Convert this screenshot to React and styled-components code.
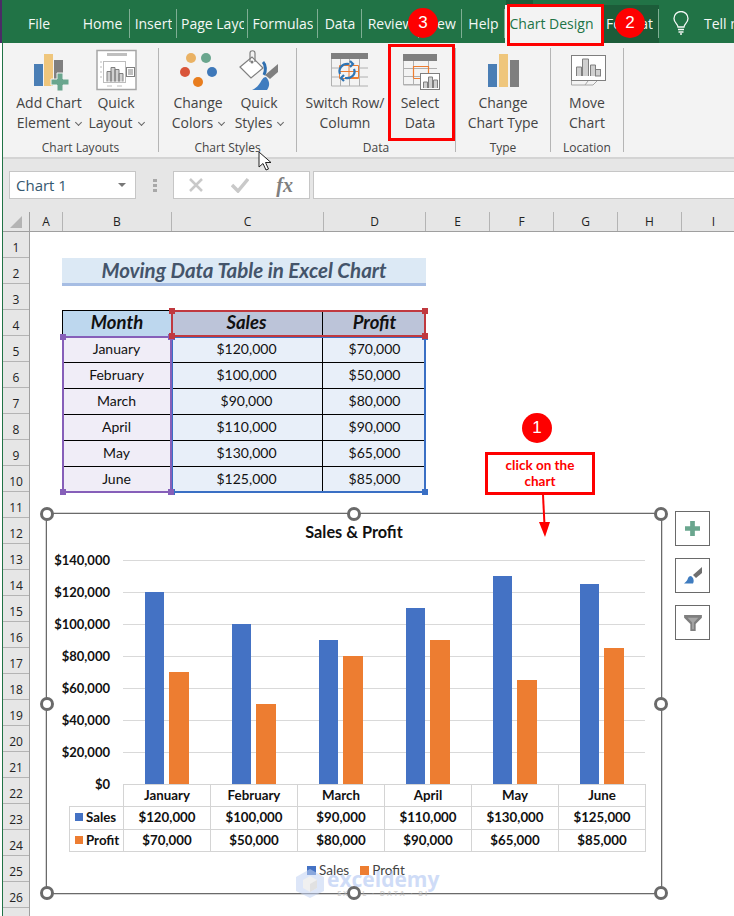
import React from 'react'
import styled, { createGlobalStyle } from 'styled-components'

const UI_FONT = '"Open Sans", "Noto Sans", sans-serif'
const CELL_FONT = 'Lato, "Liberation Sans", sans-serif'

const GlobalStyle = createGlobalStyle`
  html, body { margin: 0; padding: 0; background: #fff; }
`

const Page = styled.div`
  position: relative;
  width: 734px;
  height: 916px;
  overflow: hidden;
  display: flex;
  background: #fff;
  font-family: ${UI_FONT};
`

const LeftEdge = styled.div`
  width: 2px;
  flex: none;
  background: linear-gradient(#4b2c66 43px, #fff 43px);
  border-right: 1px solid #217346;
`

const Main = styled.div`
  flex: 1;
  min-width: 0;
  display: flex;
  flex-direction: column;
`

/* tabs */
const TabBar = styled.div`
  height: 43px;
  flex: none;
  display: flex;
  align-items: flex-end;
  overflow: hidden;
  background: #217346;
`

const Tab = styled.div`
  width: ${p => p.$w}px;
  height: 38px;
  flex: none;
  box-sizing: border-box;
  padding: 0 ${p => p.$pr || p.$pad || 3}px 2px ${p => p.$pad || 3}px;
  display: flex;
  align-items: center;
  justify-content: center;
  font-size: 14px;
  color: ${p => (p.$active ? '#217346' : '#f4f8f5')};
  background: ${p => (p.$active ? '#f3f3f3' : p.$dark ? '#1c5c39' : 'transparent')};
  position: relative;

  &::after {
    content: '';
    display: ${p => (p.$sep ? 'block' : 'none')};
    position: absolute;
    right: 0;
    top: 4px;
    height: 29px;
    width: 1px;
    background: #7fae94;
  }
`

const TabLabel = styled.span`
  min-width: 0;
  overflow: hidden;
  white-space: nowrap;
`

const TellMe = styled.div`
  flex: none;
  display: flex;
  align-items: center;
  gap: 15px;
  height: 38px;
  padding: 0 0 2px 14px;
  box-sizing: border-box;
  font-size: 14px;
  color: #f4f8f5;
  white-space: nowrap;
`

const TabSliver = styled.div`
  position: absolute;
  left: 506px;
  top: 0;
  width: 27px;
  height: 5px;
  background: #1c5c39;
`

/* ribbon */
const Ribbon = styled.div`
  height: 109px;
  flex: none;
  padding-top: 5px;
  display: flex;
  align-items: flex-start;
  background: #f3f3f3;
  border-bottom: 2px solid #d4d4d4;
`

const Group = styled.div`
  width: ${p => p.$w}px;
  height: 104px;
  flex: none;
  box-sizing: border-box;
  border-right: 1px solid #b5b5b5;
  display: flex;
  flex-direction: column;
`

const GroupButtons = styled.div`
  flex: 1;
  display: flex;
  padding-left: ${p => p.$pad || 0}px;
  justify-content: ${p => (p.$pad ? 'flex-start' : 'center')};
`

const GroupLabel = styled.div`
  height: 10px;
  line-height: 12px;
  text-align: center;
  font-size: 12px;
  color: #444;
  white-space: nowrap;
`

const RibbonButton = styled.div`
  width: ${p => p.$w}px;
  flex: none;
  display: flex;
  flex-direction: column;
  align-items: center;
`

const IconSlot = styled.div`
  height: 45px;
  display: flex;
  align-items: center;
  justify-content: center;
`

const ButtonText = styled.div`
  font-size: 14px;
  line-height: 20px;
  color: #444;
  text-align: center;
  white-space: nowrap;
`

const Caret = styled.span`
  display: inline-block;
  margin-left: 6px;
  width: 4px;
  height: 4px;
  border-right: 1px solid #666;
  border-bottom: 1px solid #666;
  transform: translateY(-3px) rotate(45deg);
`

/* formula bar */
const FormulaBar = styled.div`
  height: 53px;
  flex: none;
  box-sizing: border-box;
  padding: 12px 0 0 6px;
  display: flex;
  align-items: flex-start;
  background: #e6e6e6;
`

const FieldBox = styled.div`
  height: 28px;
  box-sizing: border-box;
  background: #fff;
  border: 1px solid #c6c6c6;
  display: flex;
  align-items: center;
`

const NameBox = styled(FieldBox)`
  width: 127px;
  flex: none;
  justify-content: space-between;
  padding: 0 9px 0 6px;
  font-size: 15px;
  color: #35586f;
`

const NameArrow = styled.span`
  width: 0;
  height: 0;
  border-left: 4px solid transparent;
  border-right: 4px solid transparent;
  border-top: 4px solid #777;
`

const Grip = styled.div`
  width: 4px;
  height: 14px;
  margin: 8px 16px 0 17px;
  flex: none;
  background: repeating-linear-gradient(#a8a8a8 0 3px, transparent 3px 5px);
`

const FxBox = styled(FieldBox)`
  width: 137px;
  flex: none;
  padding: 0 16px 0 14px;
  justify-content: space-between;
`

const FxText = styled.span`
  font-family: "Liberation Serif", serif;
  font-style: italic;
  font-weight: bold;
  font-size: 20px;
  color: #7f7f7f;
`

const FormulaInput = styled(FieldBox)`
  flex: 1;
  margin-left: 3px;
  border-right: none;
`

/* column and row headers */
const ColumnHeaders = styled.div`
  height: 19px;
  flex: none;
  display: flex;
  background: #e6e6e6;
  border-bottom: 1px solid #9f9f9f;
`

const Corner = styled.div`
  width: 27px;
  flex: none;
  box-sizing: border-box;
  border-right: 1px solid #9f9f9f;
  display: flex;
  justify-content: center;
  align-items: flex-end;
  padding-bottom: 3px;
`

const ColumnHead = styled.div`
  width: ${p => p.$w}px;
  flex: none;
  box-sizing: border-box;
  border-right: 1px solid #b4b4b4;
  text-align: center;
  font-size: 12px;
  line-height: 19px;
  color: #222;
`

const Sheet = styled.div`
  flex: 1;
  min-height: 0;
  display: flex;
`

const RowHeaders = styled.div`
  width: 27px;
  flex: none;
  box-sizing: border-box;
  background: #e6e6e6;
  border-right: 1px solid #9f9f9f;
`

const RowHead = styled.div`
  height: 26px;
  box-sizing: border-box;
  border-bottom: 1px solid #b4b4b4;
  text-align: center;
  font-size: 12px;
  line-height: 31px;
  color: #222;
`

const SheetBody = styled.div`
  flex: 1;
  min-width: 0;
  padding-top: 26px;
`

/* worksheet table */
const TitleBand = styled.div`
  width: 364px;
  height: 28px;
  margin-left: 32px;
  box-sizing: border-box;
  border-bottom: 3px solid #a6bde3;
  background: #dce9f5;
  text-align: center;
  font-family: ${CELL_FONT};
  font-weight: bold;
  font-style: italic;
  font-size: 20.5px;
  line-height: 24px;
  color: #44546a;
`

const TableWrap = styled.div`
  position: relative;
  width: 364px;
  margin: 24px 0 0 32px;
`

const DataTable = styled.div`
  display: grid;
  grid-template-columns: 109px 152px 103px;
  grid-auto-rows: 26px;
`

const Cell = styled.div`
  box-sizing: border-box;
  display: flex;
  align-items: center;
  justify-content: center;
  padding-bottom: ${p => (p.$head ? 3 : 2)}px;
  font-family: ${CELL_FONT};
  font-size: ${p => (p.$head ? 18.5 : 14)}px;
  font-weight: ${p => (p.$head ? 'bold' : 'normal')};
  font-style: ${p => (p.$head ? 'italic' : 'normal')};
  color: #111;
  background: ${p => p.$bg};
  border-top: 1px solid #000;
  border-left: ${p => (p.$boxed ? '1px solid #000' : 'none')};
  border-right: ${p => (p.$divider ? '1px solid #000' : 'none')};
`

const Selection = styled.div`
  position: absolute;
  left: ${p => p.$l}px;
  top: ${p => p.$t}px;
  width: ${p => p.$w}px;
  height: ${p => p.$h}px;
  box-sizing: border-box;
  border: 2px solid ${p => p.$c};
`

const SelectionHandle = styled.span`
  position: absolute;
  width: 6px;
  height: 6px;
  background: ${p => p.$c};
  ${p => (p.$x === 'l' ? 'left: -4px;' : 'right: -4px;')}
  ${p => (p.$y === 't' ? 'top: -4px;' : 'bottom: -4px;')}
`

/* chart */
const ChartRow = styled.div`
  display: flex;
  align-items: flex-start;
  gap: 13px;
  margin: 21px 0 0 16px;
`

const ChartFrame = styled.div`
  position: relative;
  width: 616px;
  height: 381px;
  flex: none;
  box-sizing: border-box;
  border: 1px solid #6a6a6a;
  box-shadow: 0 0 0 1px #d6d6d6;
  background: #fff;
  font-family: ${CELL_FONT};
  color: #111;
`

const ChartHandle = styled.span`
  position: absolute;
  left: ${p => p.$x}%;
  top: ${p => p.$y}%;
  width: 14px;
  height: 14px;
  box-sizing: border-box;
  margin: -7px 0 0 -7px;
  border: 3px solid #6a6a6a;
  border-radius: 50%;
  background: #fff;
`

const ChartTitle = styled.div`
  height: 46px;
  line-height: 36px;
  text-align: center;
  font-weight: bold;
  font-size: 16.3px;
`

const PlotRow = styled.div`
  display: flex;
  height: 224px;
`

const YAxis = styled.div`
  width: 76px;
  flex: none;
  box-sizing: border-box;
  padding-right: 13px;
  display: flex;
  flex-direction: column;
  justify-content: space-between;
  align-items: flex-end;
  font-weight: bold;
  font-size: 13px;
`

const YLabel = styled.div`
  height: 0;
  line-height: 0;
`

const Plot = styled.div`
  width: 522px;
  display: flex;
  background-image: linear-gradient(#d9d9d9 1px, transparent 1px);
  background-size: 100% 32px;
`

const Category = styled.div`
  flex: 1;
  display: flex;
  justify-content: center;
  align-items: flex-end;
  gap: 5px;
`

const Bar = styled.div`
  width: 19.5px;
  height: ${p => p.$h}px;
  background: ${p => p.$c};
`

const ChartTable = styled.div`
  display: grid;
  grid-template-columns: 54px repeat(6, 87px);
  grid-template-rows: 22px 23px 22px;
  margin-left: 22px;
`

const ChartCell = styled.div`
  box-sizing: border-box;
  margin: 0 -1px -1px 0;
  padding-bottom: 2px;
  border: 1px solid ${p => (p.$blank ? 'transparent' : '#d4d4d4')};
  display: flex;
  align-items: center;
  justify-content: center;
  font-weight: bold;
  font-size: 13.3px;
`

const KeyCell = styled(ChartCell)`
  justify-content: flex-start;
  gap: 3px;
  padding-left: 5px;
`

const Swatch = styled.span`
  width: ${p => p.$s || 8}px;
  height: ${p => p.$s || 8}px;
  flex: none;
  background: ${p => p.$c};
`

const Legend = styled.div`
  display: flex;
  justify-content: center;
  gap: 11px;
  margin-top: 11px;
  padding-left: 4px;
  font-size: 13.5px;
  color: #444;
`

const LegendItem = styled.div`
  display: flex;
  align-items: center;
  gap: 3px;
`

const Watermark = styled.div`
  position: absolute;
  left: 249px;
  top: 355px;
  display: flex;
  align-items: center;
  gap: 3px;
  opacity: 0.55;
  pointer-events: none;
`

const WatermarkName = styled.div`
  font-family: ${UI_FONT};
  font-weight: bold;
  font-size: 21px;
  line-height: 21px;
  color: #a9c1f2;
`

const WatermarkSub = styled.div`
  font-family: ${UI_FONT};
  font-weight: bold;
  font-size: 7px;
  line-height: 8px;
  letter-spacing: 2px;
  text-align: center;
  color: #b5b5b5;
`

const SideButtons = styled.div`
  display: flex;
  flex-direction: column;
  gap: 12px;
  margin-top: -2px;
`

const SideButton = styled.div`
  width: 35px;
  height: 35px;
  box-sizing: border-box;
  border: 1px solid #6a6a6a;
  background: #fff;
  display: flex;
  align-items: center;
  justify-content: center;
`

/* red annotations */
const Badge = styled.div`
  position: absolute;
  left: ${p => p.$x - 15}px;
  top: ${p => p.$y - 15}px;
  width: 30px;
  height: 30px;
  border-radius: 50%;
  background: #fe0000;
  color: #fff;
  font-family: "Liberation Sans", sans-serif;
  font-size: 17px;
  line-height: 30px;
  text-align: center;
`

const RedBox = styled.div`
  position: absolute;
  left: ${p => p.$x}px;
  top: ${p => p.$y}px;
  width: ${p => p.$w}px;
  height: ${p => p.$h}px;
  box-sizing: border-box;
  border: 3px solid #fe0000;
`

const CalloutBox = styled(RedBox)`
  display: flex;
  align-items: center;
  justify-content: center;
  padding: 0 14px 2px;
  background: #fff;
  text-align: center;
  font-family: ${CELL_FONT};
  font-weight: bold;
  font-size: 13.5px;
  line-height: 16px;
  color: #fe0000;
`

const Overlay = styled.svg`
  position: absolute;
  left: ${p => p.$x}px;
  top: ${p => p.$y}px;
`

const BarsIcon = ({ plus }) => (
  <svg width="46" height="45" viewBox="-1 0 46 45">
    <rect x={plus ? 7 : 7} y="16" width="9" height={plus ? 22 : 23} fill="#4a7eb5" />
    <rect x={plus ? 17 : 18} y="6" width="9" height={plus ? 32 : 33} fill="#efc67c" />
    <rect x={plus ? 27 : 29} y="12" width="9" height={plus ? 20 : 27} fill="#7f7f7f" />
    {plus && (
      <path
        d="M30 25h6v6h6v6h-6v6h-6v-6h-6v-6h6z"
        fill="#6aa68e"
        stroke="#f3f3f3"
        strokeWidth="1"
      />
    )}
  </svg>
)

const QuickLayoutIcon = () => (
  <svg width="46" height="45" viewBox="-1 0 46 45">
    <rect x="3" y="2.5" width="39" height="39" fill="#fff" stroke="#a6a6a6" strokeWidth="1.5" />
    <rect x="13" y="5" width="20" height="3" fill="#bfbfbf" />
    <rect x="9.5" y="13.5" width="22" height="21" fill="#fff" stroke="#bdbdbd" />
    <path d="M6 14h2M6 19h2M6 24h2M6 29h2M13 38h5M23 38h5" stroke="#bdbdbd" />
    <path d="M13 33.500v-10h4v10M17 33.500v-14h4v14M21 33.500v-12h4v12M25 33.500v-8h4v8" fill="#d0d0d0" stroke="#7f7f7f" />
    <rect x="32.500" y="19.500" width="8" height="9" fill="#fff" stroke="#7f7f7f" />
    <path d="M34 22h5M34 24h5M34 26h5" stroke="#7f7f7f" />
  </svg>
)

const ColorsIcon = () => (
  <svg width="46" height="45" viewBox="-1 0 46 45">
    <circle cx="15" cy="10" r="5" fill="#eab264" />
    <circle cx="30" cy="10" r="5" fill="#6aa68e" />
    <circle cx="9" cy="24" r="5" fill="#d9553a" />
    <circle cx="36" cy="24" r="5" fill="#3e78b9" />
    <circle cx="22" cy="34" r="5" fill="#e87d1e" />
  </svg>
)

const StylesIcon = () => (
  <svg width="46" height="45" viewBox="-1 0 46 45">
    <path d="M3 19 15 9l11 11-12 10z" fill="#fff" stroke="#7f7f7f" strokeWidth="1.2" />
    <path d="M13 14V5c0-3 5-3 5 0v9" fill="none" stroke="#7f7f7f" strokeWidth="1.2" />
    <circle cx="15" cy="14" r="1.500" fill="#7f7f7f" />
    <path d="M26 14c3 3 3 9 1 13" fill="none" stroke="#2f6fb0" strokeWidth="3" />
    <path d="M41 16v8l-8 7-5-4z" fill="#7f7f7f" />
    <path d="M29 29c-3 0-4 3-6 6-2 3-5 6-8 7h15c3-4 3-9-1-13z" fill="#3f7cbf" />
  </svg>
)

const SwitchIcon = () => (
  <svg width="46" height="45" viewBox="-1 0 46 45">
    <rect x="8" y="5" width="37" height="6" fill="#7f7f7f" />
    <path d="M8.500 11v27h36.500M8 20h37M8 29h37M17.500 11v27M26.500 11v27M36.500 11v27" fill="none" stroke="#b0b0b0" />
    <path d="M16.500 17.500h19v13h-19z" fill="#f3f3f3" stroke="#ed7d31" />
    <path d="M26 29.500h9.500M26 17.500v13M16.500 23.500h19" fill="none" stroke="#ed7d31" />
    <path d="M17 26c-2-5 2-11 9-10M27 13l3 3-3 3M31 21c2 5-2 10-9 9M21 33l-3-3 3-3" fill="none" stroke="#2f75b5" strokeWidth="2.200" />
  </svg>
)

const SelectDataIcon = () => (
  <svg width="46" height="45" viewBox="-1 0 46 45">
    <rect x="5" y="6" width="34" height="7" fill="#7f7f7f" />
    <path d="M5.500 13v24h17M5 20.500h34M5 28.500h18M5 36.500h18M15.500 13v24M30.500 13v12" fill="none" stroke="#b0b0b0" />
    <path d="M15.500 30V18.500h15V25M15.500 30.500H22" fill="none" stroke="#ed7d31" strokeWidth="1.200" />
    <rect x="22.500" y="25.500" width="19" height="16" fill="#fff" stroke="#7f7f7f" />
    <path d="M25.500 40v-6h4v6M30.500 40V29h4v11M35.500 40v-8h4v8" fill="#d0d0d0" stroke="#7f7f7f" />
  </svg>
)

const MoveChartIcon = () => (
  <svg width="46" height="45" viewBox="-1 0 46 45">
    <rect x="6.500" y="7.500" width="34" height="25" fill="#fff" stroke="#7f7f7f" />
    <path d="M11.500 28v-9h5v9M17.500 28V11h6v17M25.500 28V17h5v11" fill="#d0d0d0" stroke="#7f7f7f" />
    <rect x="30.500" y="21.500" width="5" height="6.500" fill="#d0d0d0" stroke="#7f7f7f" />
    <path d="M6.500 33v4H20l3-4M20 37h8l4-4" fill="none" stroke="#a6a6a6" />
  </svg>
)

const BulbIcon = () => (
  <svg width="16" height="24" viewBox="0 0 16 24" fill="none" stroke="#f4f8f5" strokeWidth="1.300">
    <path d="M5 16c0-3-4-4-4-8.500a7 7 0 0 1 14 0C15 12 11 13 11 16z" />
    <path d="M5 18.500h6M5.500 21h5M7 23h2" />
  </svg>
)

const CrossIcon = () => (
  <svg width="16" height="16" viewBox="0 0 16 16">
    <path d="M2 2 14 14M14 2 2 14" stroke="#c9c9c9" strokeWidth="2.500" />
  </svg>
)

const CheckIcon = () => (
  <svg width="18" height="16" viewBox="0 0 18 16">
    <path d="M1 8 7 14 17 2" fill="none" stroke="#c9c9c9" strokeWidth="3.500" />
  </svg>
)

const CornerIcon = () => (
  <svg width="12" height="12" viewBox="0 0 12 12">
    <path d="M12 0V12H0z" fill="#b4b4b4" />
  </svg>
)

const PlusIcon = () => (
  <svg width="15" height="15" viewBox="0 0 16 16">
    <path d="M5.500 0h5v5.500H16v5h-5.500V16h-5v-5.500H0v-5h5.500z" fill="#6aa68e" />
  </svg>
)

const BrushIcon = () => (
  <svg width="18" height="17" viewBox="0 0 18 17">
    <path d="M18 0v6l-6 5-3-3z" fill="#6f6f6f" />
    <path d="M9 9.500 11 11.500" stroke="#fff" />
    <path d="M7 9c-3 0-3 3-4 4.500-.8 1-1.800 2-3 3h9c1.500-2.500.5-6-2-7.500z" fill="#3f7cbf" />
  </svg>
)

const FunnelIcon = () => (
  <svg width="18" height="16" viewBox="0 0 20 18">
    <path d="M0 0h20v3l-7 7v8H7v-8L0 3z" fill="#7f7f7f" />
    <path d="M4 3h12l-5 5.500V16H9V8.500z" fill="#a6a6a6" />
  </svg>
)

const WatermarkLogo = () => (
  <svg width="28" height="29" viewBox="0 0 28 29">
    <path d="M14 0 28 8v14l-14 7-14-7V8z" fill="#c3d3f3" />
    <path d="M14 7 21 11v8l-7 4-7-4v-8z" fill="#e4e4e4" />
    <path d="M14 15l7-4v8l-7 4z" fill="#c9c9c9" />
  </svg>
)

const TABS = [
  { label: 'File', w: 72 },
  { label: 'Home', w: 55, sep: true },
  { label: 'Insert', w: 47, sep: true },
  { label: 'Page Layout', w: 71, sep: true, pad: 4 },
  { label: 'Formulas', w: 70, sep: true },
  { label: 'Data', w: 44, sep: true },
  { label: 'Review', w: 57, sep: true },
  { label: 'View', w: 43, sep: true },
  { label: 'Help', w: 43, sep: true },
  { label: 'Chart Design', w: 98, active: true, pr: 8 },
  { label: 'Format', w: 56, dark: true, sep: true, pr: 6 },
]

const GROUPS = [
  {
    label: 'Chart Layouts', w: 156, pad: 8,
    buttons: [
      { w: 76, icon: <BarsIcon plus />, lines: ['Add Chart', 'Element'], caret: true },
      { w: 58, icon: <QuickLayoutIcon />, lines: ['Quick', 'Layout'], caret: true },
    ],
  },
  {
    label: 'Chart Styles', w: 138, pad: 9,
    buttons: [
      { w: 60, icon: <ColorsIcon />, lines: ['Change', 'Colors'], caret: true },
      { w: 62, icon: <StylesIcon />, lines: ['Quick', 'Styles'], caret: true },
    ],
  },
  {
    label: 'Data', w: 159, pad: 2,
    buttons: [
      { w: 92, icon: <SwitchIcon />, lines: ['Switch Row/', 'Column'] },
      { w: 58, icon: <SelectDataIcon />, lines: ['Select', 'Data'] },
    ],
  },
  {
    label: 'Type', w: 95,
    buttons: [{ w: 90, icon: <BarsIcon />, lines: ['Change', 'Chart Type'] }],
  },
  {
    label: 'Location', w: 73,
    buttons: [{ w: 60, icon: <MoveChartIcon />, lines: ['Move', 'Chart'] }],
  },
]

const COLUMNS = [['A', 33], ['B', 109], ['C', 152], ['D', 102], ['E', 64], ['F', 64], ['G', 64], ['H', 64], ['I', 64]]
const ROWS = Array.from({ length: 26 }, (_, i) => i + 1)

const SALES = [
  { month: 'January', sales: 120000, profit: 70000 },
  { month: 'February', sales: 100000, profit: 50000 },
  { month: 'March', sales: 90000, profit: 80000 },
  { month: 'April', sales: 110000, profit: 90000 },
  { month: 'May', sales: 130000, profit: 65000 },
  { month: 'June', sales: 125000, profit: 85000 },
]

const money = v => '$' + v.toLocaleString('en-US')
const barHeight = v => (v * 32) / 20000
const TICKS = [140000, 120000, 100000, 80000, 60000, 40000, 20000, 0]
const HANDLES = [[0, 0], [50, 0], [100, 0], [0, 50], [100, 50], [0, 100], [50, 100], [100, 100]]
const BLUE = '#4472c4'
const ORANGE = '#ed7d31'

function Handles({ color }) {
  return ['t', 'b'].flatMap(y =>
    ['l', 'r'].map(x => <SelectionHandle key={x + y} $x={x} $y={y} $c={color} />)
  )
}

export default function App() {
  return (
    <Page>
      <GlobalStyle />
      <LeftEdge />
      <Main>
        <TabBar>
          {TABS.map(t => (
            <Tab key={t.label} $w={t.w} $sep={t.sep} $active={t.active} $dark={t.dark} $pad={t.pad} $pr={t.pr}>
              <TabLabel>{t.label}</TabLabel>
            </Tab>
          ))}
          <TellMe>
            <BulbIcon />
            <span>Tell me</span>
          </TellMe>
        </TabBar>

        <Ribbon>
          {GROUPS.map(g => (
            <Group key={g.label} $w={g.w}>
              <GroupButtons $pad={g.pad}>
                {g.buttons.map(b => (
                  <RibbonButton key={b.lines[0]} $w={b.w}>
                    <IconSlot>{b.icon}</IconSlot>
                    <ButtonText>{b.lines[0]}</ButtonText>
                    <ButtonText>
                      {b.lines[1]}
                      {b.caret && <Caret />}
                    </ButtonText>
                  </RibbonButton>
                ))}
              </GroupButtons>
              <GroupLabel>{g.label}</GroupLabel>
            </Group>
          ))}
        </Ribbon>

        <FormulaBar>
          <NameBox>
            Chart 1
            <NameArrow />
          </NameBox>
          <Grip />
          <FxBox>
            <CrossIcon />
            <CheckIcon />
            <FxText>fx</FxText>
          </FxBox>
          <FormulaInput />
        </FormulaBar>

        <ColumnHeaders>
          <Corner>
            <CornerIcon />
          </Corner>
          {COLUMNS.map(([name, w]) => (
            <ColumnHead key={name} $w={w}>{name}</ColumnHead>
          ))}
        </ColumnHeaders>

        <Sheet>
          <RowHeaders>
            {ROWS.map(n => (
              <RowHead key={n}>{n}</RowHead>
            ))}
          </RowHeaders>

          <SheetBody>
            <TitleBand>Moving Data Table in Excel Chart</TitleBand>

            <TableWrap>
              <DataTable>
                <Cell $head $boxed $bg="#bdd7ee">Month</Cell>
                <Cell $head $bg="#bcc4d9" $divider>Sales</Cell>
                <Cell $head $bg="#bcc4d9">Profit</Cell>
                {SALES.map(r => (
                  <React.Fragment key={r.month}>
                    <Cell $bg="#f0edf7">{r.month}</Cell>
                    <Cell $bg="#e8eff9" $divider>{money(r.sales)}</Cell>
                    <Cell $bg="#e8eff9">{money(r.profit)}</Cell>
                  </React.Fragment>
                ))}
              </DataTable>
              <Selection $l={109} $t={26} $w={255} $h={157} $c="#3a6fc4"><Handles color="#3a6fc4" /></Selection>
              <Selection $l={0} $t={26} $w={110} $h={157} $c="#865fb9"><Handles color="#865fb9" /></Selection>
              <Selection $l={109} $t={0} $w={255} $h={27} $c="#c0393f"><Handles color="#c0393f" /></Selection>
            </TableWrap>

            <ChartRow>
              <ChartFrame>
                <ChartTitle>Sales &amp; Profit</ChartTitle>
                <PlotRow>
                  <YAxis>
                    {TICKS.map(t => (
                      <YLabel key={t}>{money(t)}</YLabel>
                    ))}
                  </YAxis>
                  <Plot>
                    {SALES.map(r => (
                      <Category key={r.month}>
                        <Bar $h={barHeight(r.sales)} $c={BLUE} />
                        <Bar $h={barHeight(r.profit)} $c={ORANGE} />
                      </Category>
                    ))}
                  </Plot>
                </PlotRow>
                <ChartTable>
                  <ChartCell $blank />
                  {SALES.map(r => (
                    <ChartCell key={r.month}>{r.month}</ChartCell>
                  ))}
                  <KeyCell><Swatch $c={BLUE} />Sales</KeyCell>
                  {SALES.map(r => (
                    <ChartCell key={r.month}>{money(r.sales)}</ChartCell>
                  ))}
                  <KeyCell><Swatch $c={ORANGE} />Profit</KeyCell>
                  {SALES.map(r => (
                    <ChartCell key={r.month}>{money(r.profit)}</ChartCell>
                  ))}
                </ChartTable>
                <Legend>
                  <LegendItem><Swatch $c={BLUE} $s={9} />Sales</LegendItem>
                  <LegendItem><Swatch $c={ORANGE} $s={9} />Profit</LegendItem>
                </Legend>
                <Watermark>
                  <WatermarkLogo />
                  <div>
                    <WatermarkName>exceldemy</WatermarkName>
                    <WatermarkSub>EXCEL · DATA · BI</WatermarkSub>
                  </div>
                </Watermark>
                {HANDLES.map(([x, y]) => (
                  <ChartHandle key={x + '-' + y} $x={x} $y={y} />
                ))}
              </ChartFrame>
              <SideButtons>
                <SideButton><PlusIcon /></SideButton>
                <SideButton><BrushIcon /></SideButton>
                <SideButton><FunnelIcon /></SideButton>
              </SideButtons>
            </ChartRow>
          </SheetBody>
        </Sheet>
      </Main>

      <TabSliver />
      <RedBox $x={507} $y={4} $w={97} $h={42} />
      <RedBox $x={388} $y={44} $w={67} $h={97} />
      <Badge $x={423} $y={23}>3</Badge>
      <Badge $x={630} $y={23}>2</Badge>
      <Badge $x={537} $y={428}>1</Badge>
      <CalloutBox $x={485} $y={452} $w={110} $h={43}>click on the chart</CalloutBox>
      <Overlay $x={535} $y={495} width="20" height="48" viewBox="0 0 20 48">
        <path d="M8 0 9.500 30" stroke="#fe0000" strokeWidth="2" />
        <path d="M4 27h11l-5 15z" fill="#fe0000" />
      </Overlay>
      <Overlay $x={258} $y={151} width="14" height="20" viewBox="0 0 14 20">
        <path d="M1 1v15l4-3.500 3 6.500 2.500-1-3-6.500H13z" fill="#fff" stroke="#222" strokeWidth="1" />
      </Overlay>
    </Page>
  )
}
